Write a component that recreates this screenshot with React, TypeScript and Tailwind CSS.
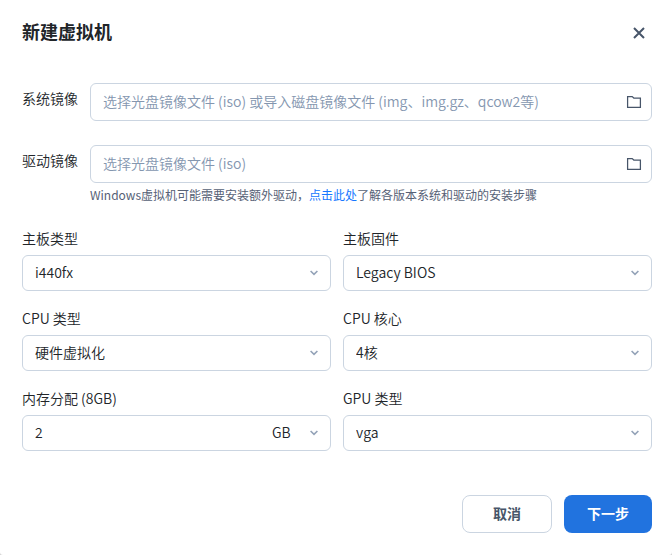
import { useState } from "react";
import type { ReactNode } from "react";

type ImageFieldProps = {
  id: string;
  label: string;
  placeholder: string;
  children?: ReactNode;
};

function FolderIcon() {
  return (
    <svg width="16" height="16" viewBox="0 0 16 16" fill="none" aria-hidden="true">
      <path
        d="M1.6 2.6H6.2L7.8 4H14.4V13.4H1.6Z"
        stroke="currentColor"
        strokeWidth="1.25"
      />
    </svg>
  );
}

function ChevronIcon() {
  return (
    <svg
      width="10"
      height="10"
      viewBox="0 0 10 10"
      fill="none"
      aria-hidden="true"
      className="pointer-events-none text-[#94a3b8]"
    >
      <path d="M1.6 3L5 6.4L8.4 3" stroke="currentColor" strokeWidth="1.6" />
    </svg>
  );
}

function ImageField({ id, label, placeholder, children }: ImageFieldProps) {
  return (
    <div className="flex items-start gap-3">
      <label htmlFor={id} className="shrink-0 pt-[5px] text-sm leading-5">
        {label}
      </label>
      <div className="min-w-0 flex-1">
        <div className="flex h-[38px] items-center rounded-md border border-[#cbd5e1] pr-[9px] pl-3">
          <input
            id={id}
            type="text"
            placeholder={placeholder}
            className="min-w-0 flex-1 bg-transparent pb-0.5 text-sm leading-5 outline-none placeholder:text-[#8496af]"
          />
          <button type="button" aria-label={`浏览${label}`} className="text-[#475569]">
            <FolderIcon />
          </button>
        </div>
        {children}
      </div>
    </div>
  );
}

function SelectField({ id, label, options }: { id: string; label: string; options: string[] }) {
  return (
    <div>
      <label htmlFor={id} className="block text-sm leading-5">
        {label}
      </label>
      <div className="mt-[7px] grid h-9 items-center rounded-md border border-[#cbd5e1]">
        <select
          id={id}
          className="col-start-1 row-start-1 h-full w-full appearance-none bg-transparent px-3 pb-0.5 text-sm leading-5 outline-none"
        >
          {options.map((option) => (
            <option key={option}>{option}</option>
          ))}
        </select>
        <span className="pointer-events-none col-start-1 row-start-1 mr-[11px] justify-self-end">
          <ChevronIcon />
        </span>
      </div>
    </div>
  );
}

export default function App() {
  const [memory, setMemory] = useState("2");

  return (
    <div className="min-h-screen bg-neutral-300 font-['Noto_Sans_CJK_SC',sans-serif] font-[350] text-[#212529]">
      <form
        className="min-h-screen rounded-b-[3px] bg-white pt-[19px] pr-5 pb-[22px] pl-[22px]"
        onSubmit={(e) => e.preventDefault()}
      >
        <header className="flex items-start justify-between">
          <h1 className="text-lg leading-6 font-bold">新建虚拟机</h1>
          <button type="button" aria-label="关闭" className="mt-[7px] mr-1.5 text-[#475569]">
            <svg width="14" height="14" viewBox="0 0 14 14" fill="none" aria-hidden="true">
              <path d="M2 2L12 12M12 2L2 12" stroke="currentColor" strokeWidth="2" />
            </svg>
          </button>
        </header>

        <div className="mt-10 flex flex-col gap-6">
          <ImageField
            id="system-image"
            label="系统镜像"
            placeholder="选择光盘镜像文件 (iso) 或导入磁盘镜像文件 (img、img.gz、qcow2等)"
          />
          <ImageField id="driver-image" label="驱动镜像" placeholder="选择光盘镜像文件 (iso)">
            <p className="mt-1 text-xs leading-4 font-normal text-[#566176]">
              Windows虚拟机可能需要安装额外驱动，
              <a href="#guide" className="text-[#1677ff]">
                点击此处
              </a>
              了解各版本系统和驱动的安装步骤
            </p>
          </ImageField>
        </div>

        <div className="mt-[25px] grid grid-cols-2 gap-x-3 gap-y-[17px]">
          <SelectField id="board" label="主板类型" options={["i440fx", "q35"]} />
          <SelectField id="firmware" label="主板固件" options={["Legacy BIOS", "UEFI"]} />
          <SelectField id="cpu-type" label="CPU 类型" options={["硬件虚拟化", "软件模拟"]} />
          <SelectField id="cpu-cores" label="CPU 核心" options={["4核", "2核", "1核"]} />
          <div>
            <label htmlFor="memory" className="block text-sm leading-5">
              内存分配 (8GB)
            </label>
            <div className="mt-[7px] flex h-9 items-center rounded-md border border-[#cbd5e1] pl-3">
              <input
                id="memory"
                type="text"
                inputMode="numeric"
                value={memory}
                onChange={(e) => setMemory(e.target.value)}
                className="min-w-0 flex-1 bg-transparent pb-0.5 text-sm leading-5 outline-none"
              />
              <div className="grid h-full w-[58px] items-center">
                <select
                  aria-label="内存单位"
                  className="col-start-1 row-start-1 h-full w-full appearance-none bg-transparent pb-0.5 text-sm leading-5 outline-none"
                >
                  <option>GB</option>
                  <option>MB</option>
                </select>
                <span className="pointer-events-none col-start-1 row-start-1 mr-[11px] justify-self-end">
                  <ChevronIcon />
                </span>
              </div>
            </div>
          </div>
          <SelectField id="gpu" label="GPU 类型" options={["vga", "virtio", "qxl"]} />
        </div>

        <footer className="mt-11 flex justify-end gap-3">
          <button
            type="button"
            className="h-[38px] rounded-lg border border-[#cbd5e1] px-[30px] pb-0.5 text-sm leading-5 font-bold text-[#475569]"
          >
            取消
          </button>
          <button
            type="submit"
            className="h-[38px] rounded-lg bg-[#2173df] px-[23px] pb-0.5 text-sm leading-5 font-bold text-white"
          >
            下一步
          </button>
        </footer>
      </form>
    </div>
  );
}
